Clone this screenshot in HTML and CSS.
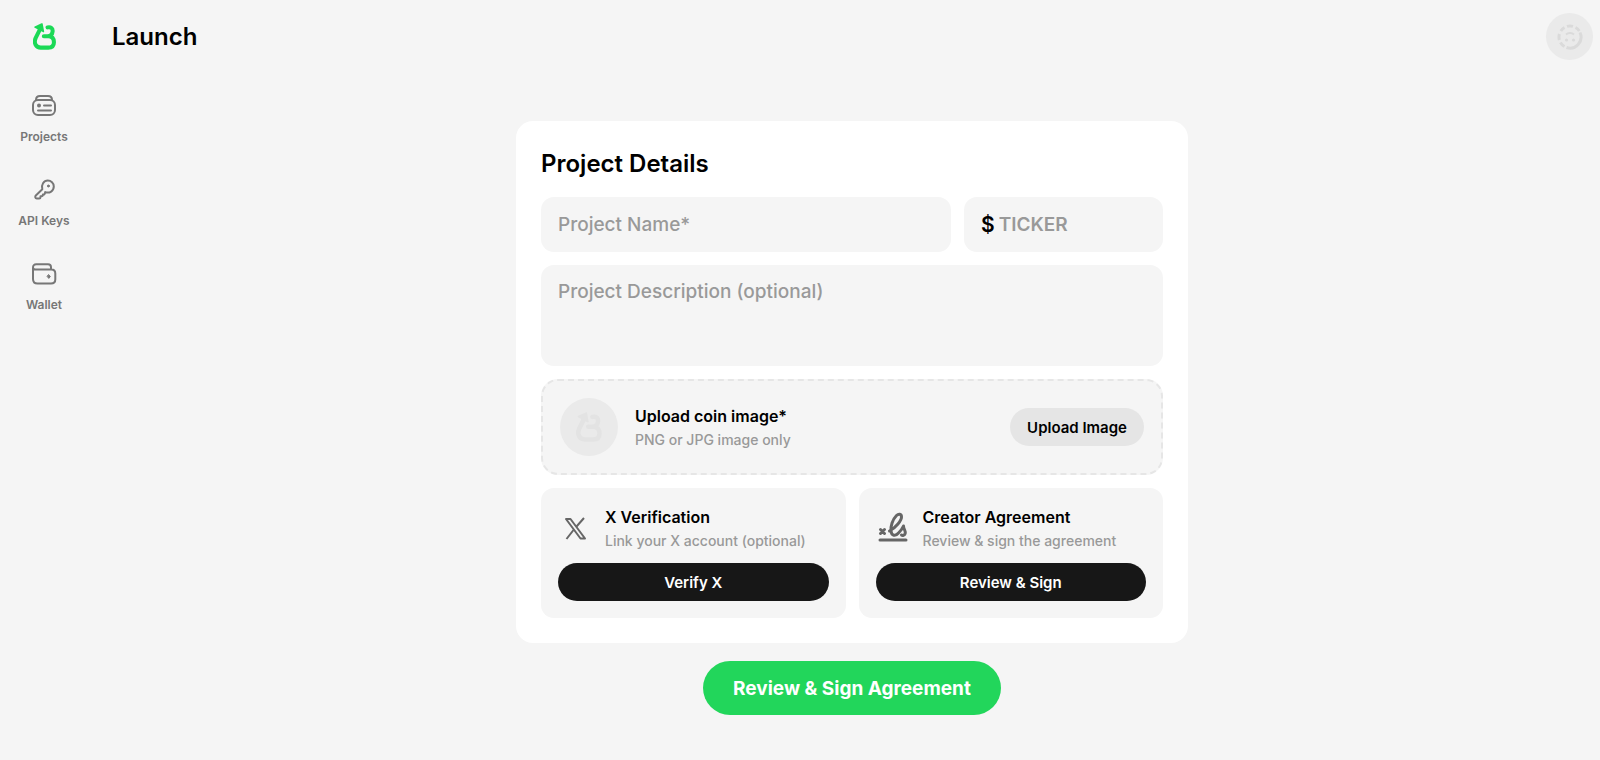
FILE: index.html
```html
<!DOCTYPE html>
<html lang="en">
<head>
    <meta charset="UTF-8">
    <meta name="viewport" content="width=device-width, initial-scale=1.0">
    <title>Launch</title>
    <link rel="stylesheet" href="styles.css">
</head>
<body>
    <!-- shared logo shape -->
    <svg class="sprite" aria-hidden="true">
        <symbol id="logo" viewBox="0 0 68 80">
            <path d="M22 16 L8 44 C1 60 9 73 23 73 H45 C56 73 62 67 62 57 C62 46 56 39 45 39 H32 M43 13 C53 11 59 16 58 25 C57 34 52 39 43 39" fill="none" stroke="currentColor" stroke-width="12" stroke-linecap="round" stroke-linejoin="round"/>
            <path d="M5 10 L25 1 C28 0 29 2 29 4 L33 25 C33 28 31 28 29 27 L5 14 C3 13 3 11 5 10 Z" fill="currentColor"/>
        </symbol>
    </svg>

    <div class="layout">
        <nav class="sidebar">
            <a href="#" class="logo" aria-label="Home"><svg><use href="#logo"/></svg></a>
            <a href="#" class="nav-item">
                <svg viewBox="0 0 26 26" fill="none" stroke="currentColor" stroke-width="2" stroke-linecap="round" stroke-linejoin="round">
                    <rect x="2" y="7" width="22" height="15" rx="5"/>
                    <path d="M5 7 C5 4 6 3 9 3 H17 C20 3 21 4 21 7"/>
                    <path d="M13 12.5 H20 M7 17.5 H20"/>
                    <circle cx="8" cy="12.5" r="1" fill="currentColor"/>
                </svg>
                <span>Projects</span>
            </a>
            <a href="#" class="nav-item">
                <svg viewBox="0 0 26 26" fill="none" stroke="currentColor" stroke-width="2" stroke-linecap="round" stroke-linejoin="round">
                    <path d="M11.3 12.3 L4.8 18.5 C3.8 19.6 4.2 21.5 5.8 21.6 H8.2 C9.2 21.6 9.5 21 9.5 20 V19.3 H10.5 C11.6 19.3 11.9 18.8 11.9 17.6 H12.6 C13.6 17.6 13.9 17 14.2 15.1 C18.6 16.8 22.8 13.8 22.8 9.6 C22.8 6 20 3.6 16.8 3.6 C12.8 3.6 9.9 7.8 11.3 12.3 Z"/>
                    <circle cx="17.4" cy="9" r="1" fill="currentColor" stroke-width="1"/>
                </svg>
                <span>API Keys</span>
            </a>
            <a href="#" class="nav-item">
                <svg viewBox="0 0 26 26" fill="none" stroke="currentColor" stroke-width="2" stroke-linecap="round" stroke-linejoin="round">
                    <path d="M2 7 V18 C2 21 3.5 22.5 6.5 22.5 H20 C23 22.5 24.3 21 24.3 18.5 V12.5 C24.3 10 23 8.5 20.3 8.5 H4.5 C3 8.5 2 8 2 6.5 C2 4.5 3.2 3.3 5.2 3.3 H17 C19.2 3.3 20 4.3 20 6.3 V8.3"/>
                    <path d="M17.8 13.8 L19.3 15.6 L17.8 17.4 L16.3 15.6 Z" fill="currentColor" stroke-width="1"/>
                </svg>
                <span>Wallet</span>
            </a>
        </nav>

        <div class="page">
            <header class="header">
                <h1>Launch</h1>
                <button type="button" class="avatar" aria-label="Account">
                    <svg viewBox="0 0 26 26" fill="none" stroke="currentColor">
                        <path d="M23 8.5 A11 11 0 0 1 9.5 23.5" stroke-width="3"/>
                        <path d="M10 2.4 A11 11 0 0 1 16 2.4 M18.5 3.5 A11 11 0 0 1 22.3 7 M3.8 7 A11 11 0 0 1 7.5 3.5 M2.4 16 A11 11 0 0 1 2.4 10 M7.5 22.5 A11 11 0 0 1 3.4 18.5" stroke-width="3"/>
                        <path d="M9 10.5 C11 8.5 15 8.5 17 10.5" stroke-width="2"/>
                        <circle cx="9.5" cy="16" r="1.6" fill="currentColor" stroke="none"/>
                        <circle cx="16.5" cy="16" r="1.6" fill="currentColor" stroke="none"/>
                    </svg>
                </button>
            </header>

            <main>
                <form class="launch-form">
                    <section class="card">
                        <h2>Project Details</h2>
                        <div class="fields">
                            <div class="row">
                                <input type="text" class="field name" placeholder="Project Name*" aria-label="Project name">
                                <label class="field ticker">
                                    <span>$</span>
                                    <input type="text" placeholder="TICKER" aria-label="Ticker">
                                </label>
                            </div>
                            <textarea class="field description" placeholder="Project Description (optional)" aria-label="Project description"></textarea>

                            <div class="upload">
                                <div class="coin"><svg><use href="#logo"/></svg></div>
                                <div class="text">
                                    <h3>Upload coin image*</h3>
                                    <p>PNG or JPG image only</p>
                                </div>
                                <button type="button" class="btn btn-gray">Upload Image</button>
                            </div>

                            <div class="row">
                                <div class="panel">
                                    <div class="panel-head">
                                        <svg class="panel-icon" viewBox="0 0 34 34" fill="none" stroke="currentColor" stroke-width="2" stroke-linejoin="round">
                                            <path d="M8 7 H12.5 L27 26.5 H22.5 Z"/>
                                            <path d="M26 6 L18.5 14.5 M15.5 18 L8.5 27"/>
                                        </svg>
                                        <div class="text">
                                            <h3>X Verification</h3>
                                            <p>Link your X account (optional)</p>
                                        </div>
                                    </div>
                                    <button type="button" class="btn btn-dark">Verify X</button>
                                </div>
                                <div class="panel">
                                    <div class="panel-head">
                                        <svg class="panel-icon" viewBox="0 0 34 34" fill="none" stroke="currentColor" stroke-width="3" stroke-linecap="round" stroke-linejoin="round">
                                            <path d="M4 28 H30"/>
                                            <path d="M4.5 17.5 L8.5 21.5 M8.5 17.5 L4.5 21.5"/>
                                            <path d="M13.5 19 C20 15.5 25.5 8.5 25.5 5 C25.5 1.5 22.5 1.5 20.5 3.5 C16.5 7.5 14.5 14.5 15 19 C15.5 24 19.5 24.5 22.5 21 C24.5 19 26.5 16.5 27.5 14 C27.5 17.5 30 19 29.2 21.5 C28.5 23.5 26.5 23.8 25.5 23"/>
                                        </svg>
                                        <div class="text">
                                            <h3>Creator Agreement</h3>
                                            <p>Review &amp; sign the agreement</p>
                                        </div>
                                    </div>
                                    <button type="button" class="btn btn-dark">Review &amp; Sign</button>
                                </div>
                            </div>
                        </div>
                    </section>
                    <button type="submit" class="submit-btn">Review &amp; Sign Agreement</button>
                </form>
            </main>
        </div>
    </div>
</body>
</html>
```
FILE: styles.css
```css
* {
    margin: 0;
    padding: 0;
    box-sizing: border-box;
}

body {
    font-family: Inter, sans-serif;
    background-color: #f5f5f5;
    color: #000;
}

button,
input,
textarea {
    font-family: inherit;
    border: none;
}

button {
    cursor: pointer;
}

.sprite {
    display: none;
}

.layout {
    display: flex;
    gap: 16px;
    min-height: 100vh;
}

.sidebar {
    width: 88px;
    display: flex;
    flex-direction: column;
    align-items: center;
    padding-top: 23px;
}

.logo {
    color: #1bd956;
    margin-bottom: 43px;
}

.logo svg {
    display: block;
    width: 23px;
    height: 27px;
}

.nav-item {
    display: flex;
    flex-direction: column;
    align-items: center;
    gap: 10px;
    margin-bottom: 32px;
    color: #777;
    font-size: 12px;
    line-height: 16px;
    font-weight: 600;
    text-decoration: none;
}

.nav-item svg {
    width: 26px;
    height: 26px;
}

.page {
    flex: 1;
}

.header {
    display: flex;
    justify-content: space-between;
    align-items: center;
    padding: 13px 7px 13px 8px;
}

h1,
h2 {
    font-size: 24px;
    line-height: 35px;
    font-weight: 600;
}

.avatar {
    display: flex;
    align-items: center;
    justify-content: center;
    width: 47px;
    height: 47px;
    border-radius: 50%;
    background-color: #eaeaea;
    color: #dadada;
}

.avatar svg {
    width: 26px;
    height: 26px;
}

.launch-form {
    display: flex;
    flex-direction: column;
    align-items: center;
    gap: 18px;
    padding: 48px 16px;
}

.card {
    width: 100%;
    max-width: 672px;
    padding: 25px;
    border-radius: 17px;
    background-color: #fff;
}

h2 {
    margin-bottom: 16px;
}

.fields {
    display: flex;
    flex-direction: column;
    gap: 13px;
}

.row {
    display: flex;
    gap: 13px;
}

.field {
    padding: 0 17px;
    border-radius: 13px;
    background-color: #f5f5f5;
    font-size: 19px;
    line-height: 24px;
    font-weight: 500;
    outline: none;
}

::placeholder {
    color: #999;
    opacity: 1;
}

.name {
    flex: 1;
    min-width: 0;
    height: 55px;
}

.ticker {
    display: flex;
    align-items: center;
    gap: 4px;
    width: 199px;
    height: 55px;
}

.ticker span {
    font-size: 21px;
    font-weight: 600;
}

.ticker input {
    width: 100%;
    background: none;
    font-size: 19px;
    font-weight: 600;
    outline: none;
}

.description {
    display: block;
    width: 100%;
    height: 101px;
    padding: 15px 17px;
    resize: none;
}

.upload {
    display: flex;
    align-items: center;
    gap: 17px;
    padding: 17px;
    border: 2px dashed #e6e6e6;
    border-radius: 17px;
    background-color: #f5f5f5;
}

.coin {
    display: flex;
    align-items: center;
    justify-content: center;
    width: 58px;
    height: 58px;
    border-radius: 50%;
    background-color: #eaeaea;
    color: #e3e3e3;
}

.coin svg {
    width: 26px;
    height: 30px;
}

.text {
    flex: 1;
}

.text h3 {
    font-size: 16px;
    line-height: 24px;
    font-weight: 600;
}

.text p {
    font-size: 14px;
    line-height: 23px;
    font-weight: 500;
    color: #999;
}

.btn {
    height: 38px;
    padding: 0 17px;
    border-radius: 19px;
    font-size: 15px;
    font-weight: 600;
}

.btn-gray {
    background-color: #e5e5e5;
    color: #000;
}

.btn-dark {
    background-color: #171717;
    color: #fff;
}

.panel {
    flex: 1;
    display: flex;
    flex-direction: column;
    gap: 11px;
    padding: 17px;
    border-radius: 13px;
    background-color: #f5f5f5;
}

.panel-head {
    display: flex;
    align-items: center;
    gap: 13px;
}

.panel-icon {
    width: 34px;
    height: 34px;
    color: #666;
}

.submit-btn {
    height: 54px;
    padding: 0 30px;
    border-radius: 27px;
    background-color: #22d65b;
    color: #fff;
    font-size: 19px;
    font-weight: 700;
}
```
